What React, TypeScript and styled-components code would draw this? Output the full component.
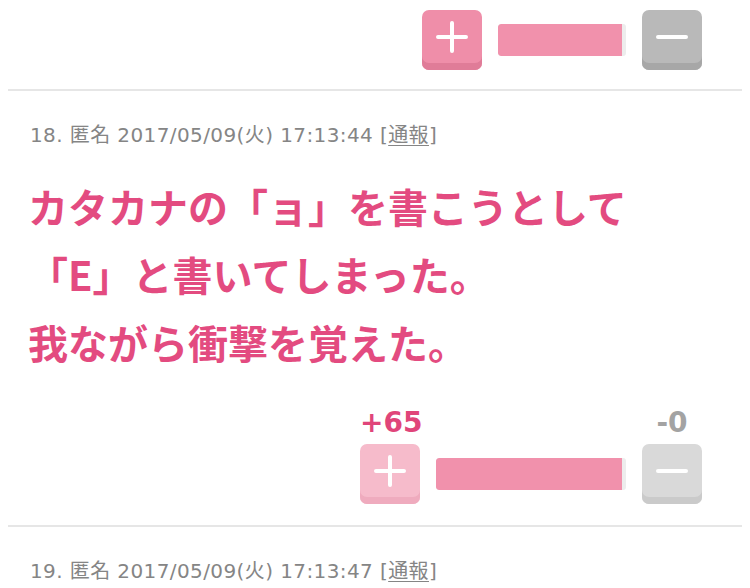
import React from "react";
import styled, { createGlobalStyle } from "styled-components";

const GlobalStyle = createGlobalStyle`
  html, body { margin: 0; padding: 0; background: #ffffff; }
  body { font-family: "DejaVu Sans", "Noto Sans CJK JP", sans-serif; }
`;

const Page = styled.div`
  width: 750px;
  height: 588px;
  overflow: hidden;
  padding: 0 8px;
  box-sizing: border-box;
`;

const Comment = styled.article<{ $partial?: boolean }>`
  border-bottom: 2px solid #e6e6e6;
  padding: ${(p) => (p.$partial ? "10px 0 19px" : "29px 0 21px")};
`;

const Meta = styled.div`
  padding-left: 22px;
  font-family: "DejaVu Sans", "Noto Sans CJK JP", sans-serif;
  font-size: 20px;
  letter-spacing: 0.4px;
  line-height: 30px;
  color: #858585;
  white-space: nowrap;
`;

const Report = styled.a`
  color: #858585;
  text-decoration: underline;
  text-underline-offset: 3px;
  text-decoration-thickness: 1px;
`;

const Body = styled.p`
  margin: 22px 0 0;
  padding-left: 20px;
  font-family: "Noto Sans CJK JP", sans-serif;
  font-weight: 700;
  font-size: 40px;
  line-height: 68px;
  color: #e34b80;
`;

const Votes = styled.div<{ $bar: number; $gap: number }>`
  display: grid;
  grid-template-columns: 60px ${(p) => p.$bar}px 60px;
  column-gap: 16px;
  justify-content: end;
  align-items: center;
  padding-right: 40px;
  margin-top: ${(p) => p.$gap}px;
`;

const Count = styled.div<{ $tone: "plus" | "minus" }>`
  font-family: "DejaVu Sans", sans-serif;
  font-weight: 700;
  font-size: 28px;
  line-height: 30px;
  text-align: center;
  margin-bottom: 6px;
  color: ${(p) => (p.$tone === "plus" ? "#e0457a" : "#a3a3a3")};
`;

const Spacer = styled.div``;

const VoteButton = styled.button<{ $face: string; $shade: string }>`
  width: 60px;
  height: 60px;
  border: 0;
  padding: 0 0 7px;
  border-radius: 7px;
  background: ${(p) => p.$face};
  box-shadow: inset 0 -7px 0 ${(p) => p.$shade};
  display: flex;
  align-items: center;
  justify-content: center;
  cursor: pointer;
`;

const Track = styled.div`
  height: 32px;
  border-radius: 3px;
  background: #ededed;
  overflow: hidden;
  display: flex;
`;

const Fill = styled.div`
  height: 100%;
  background: #f191ac;
  border-radius: 3px 0 0 3px;
`;

const PlusIcon = () => (
  <svg width="32" height="32" viewBox="0 0 32 32">
    <path d="M16 2v28M2 16h28" stroke="#fff" strokeWidth="4" strokeLinecap="round" fill="none" />
  </svg>
);

const MinusIcon = () => (
  <svg width="32" height="32" viewBox="0 0 32 32">
    <path d="M2 16h28" stroke="#fff" strokeWidth="4" strokeLinecap="round" fill="none" />
  </svg>
);

type VoteProps = {
  plus?: string;
  minus?: string;
  bar: number;
  active?: boolean;
  gap?: number;
};

const VoteBar = ({ plus, minus, bar, active, gap = 0 }: VoteProps) => (
  <Votes $bar={bar} $gap={gap}>
    {plus !== undefined && (
      <>
        <Count $tone="plus">{plus}</Count>
        <Spacer />
        <Count $tone="minus">{minus}</Count>
      </>
    )}
    <VoteButton
      $face={active ? "#ef8ea9" : "#f6bbcb"}
      $shade={active ? "#e07c98" : "#efabbe"}
      aria-label="plus"
    >
      <PlusIcon />
    </VoteButton>
    <Track>
      <Fill style={{ width: `${bar - 4}px` }} />
    </Track>
    <VoteButton
      $face={active ? "#b9b9b9" : "#d9d9d9"}
      $shade={active ? "#a7a7a7" : "#cacaca"}
      aria-label="minus"
    >
      <MinusIcon />
    </VoteButton>
  </Votes>
);

export default function App() {
  return (
    <>
      <GlobalStyle />
      <Page>
        <Comment $partial>
          <VoteBar bar={128} active />
        </Comment>
        <Comment>
          <Meta>
            18. 匿名 2017/05/09(火) 17:13:44 [<Report>通報</Report>]
          </Meta>
          <Body>
            カタカナの「ョ」を書こうとして
            <br />
            「E」と書いてしまった。
            <br />
            我ながら衝撃を覚えた。
          </Body>
          <VoteBar plus="+65" minus="-0" bar={190} gap={32} />
        </Comment>
        <Comment>
          <Meta>
            19. 匿名 2017/05/09(火) 17:13:47 [<Report>通報</Report>]
          </Meta>
        </Comment>
      </Page>
    </>
  );
}
